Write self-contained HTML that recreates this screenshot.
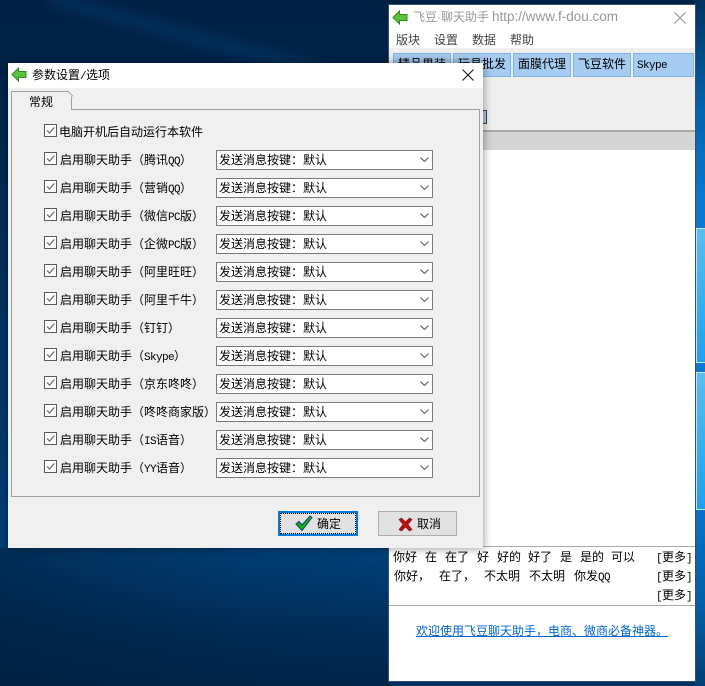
<!DOCTYPE html>
<html lang="zh-CN">
<head>
<meta charset="utf-8">
<title>参数设置/选项</title>
<style>
html,body{margin:0;padding:0;width:705px;height:686px;overflow:hidden;}
body{position:relative;font-family:"WenQuanYi Zen Hei","Liberation Sans","Noto Sans CJK SC",sans-serif;font-size:12px;color:#000;background:#012a55;}
.abs,.abs *{box-sizing:border-box;}
.abs{position:absolute;}
.t{position:absolute;white-space:pre;line-height:14px;height:14px;}
i{font-style:normal;font-family:"Liberation Mono",monospace;font-size:11px;letter-spacing:-.6px;}
#bg{left:0;top:0;width:705px;height:686px;background:linear-gradient(180deg,#011f42 0%,#01254c 12%,#013567 50%,#01407a 78%,#012f5e 100%);}
#bg2{left:0;top:548px;width:389px;height:138px;background:linear-gradient(90deg,rgba(1,28,56,.5) 0%,rgba(1,28,56,.12) 60%,rgba(1,28,56,0) 100%),linear-gradient(180deg,#00417a 0%,#00396e 25%,#012d58 60%,#01244a 100%);}
#streak{left:50px;top:-8px;width:340px;height:12px;background:#02325f;transform:rotate(15deg);transform-origin:0 0;filter:blur(6px);}
#win{left:389px;top:5px;width:306px;height:676px;background:#fff;box-shadow:0 0 0 1px #33506f;}
#strip{left:695px;top:0;width:10px;height:686px;background:linear-gradient(180deg,#01335f 0%,#0463ad 16%,#0a78d0 30%,#0a78d0 70%,#045fa8 88%,#023e76 100%);}
.pane{position:absolute;left:696px;width:9px;background:linear-gradient(180deg,#5dbcf0,#1fa0ea);border:1px solid #c3e4f3;border-right:0;}
.tb{position:absolute;top:53px;width:56px;height:22px;background:#a6ccf2;border:1px solid #7fb3ee;line-height:21px;text-align:center;}
#dlg{left:8px;top:63px;width:475px;height:485px;background:#f0f0f0;box-shadow:0 0 8px 1px rgba(0,0,0,.38);}
#dt{left:0;top:0;width:475px;height:25px;background:#fff;}
#panel{left:3px;top:46px;width:469px;height:388px;border:1px solid #a0a0a0;background:#f0f0f0;}
#tab{left:3px;top:28px;width:61px;height:19px;background:#f0f0f0;border:1px solid #a0a0a0;border-bottom:0;clip-path:polygon(0 0,56px 0,100% 6px,100% 100%,0 100%);}
#tabd{left:59px;top:28px;width:1px;height:8px;background:#a0a0a0;transform:rotate(-45deg);transform-origin:0 0;}
.cb{position:absolute;left:36px;width:13px;height:13px;border:1px solid #5a5a5a;background:#fff;}
.sel{position:absolute;left:208px;width:217px;height:20px;border:1px solid #7a7a7a;background:#fff;line-height:18px;padding-left:2px;}
.btn{position:absolute;top:448px;height:25px;}
</style>
</head>
<body>
<div class="abs" id="bg"></div>
<div class="abs" id="bg2"></div>
<div class="abs" id="streak"></div>
<div class="abs" id="strip"></div>
<div class="pane" style="top:228px;height:133px;"></div>
<div class="pane" style="top:372px;height:136px;"></div>

<div class="abs" id="win">
  <svg style="position:absolute;left:3px;top:5px" width="16" height="15" viewBox="0 0 16 15"><path d="M1 7.500 7.500 1v3.500H15v6H7.500V14z" fill="#5cc13c" stroke="#2f8a1e"/></svg>
  <div class="t" style="left:24px;top:5px;color:#989898;">飞豆·聊天助手</div>
  <div class="t" style="left:103px;top:5px;color:#989898;font-size:13.5px;font-family:'Liberation Sans',sans-serif;">http://www.f-dou.com</div>
  <svg style="position:absolute;left:285px;top:7px" width="12" height="12" viewBox="0 0 12 12"><path d="M.5.5l11 11M11.5.5l-11 11" stroke="#8f8f8f" fill="none"/></svg>
  <div class="t" style="left:7px;top:28px;color:#444;">版块</div>
  <div class="t" style="left:45px;top:28px;color:#444;">设置</div>
  <div class="t" style="left:83px;top:28px;color:#444;">数据</div>
  <div class="t" style="left:121px;top:28px;color:#444;">帮助</div>
  <div class="abs" style="left:0;top:43px;width:306px;height:82px;background:#efefef;"></div>
  <div class="abs" style="left:0;top:125px;width:306px;height:2px;background:#a9a9a9;"></div>
  <div class="abs" style="left:0;top:127px;width:306px;height:18px;background:#d4d4d4;"></div>
  <div class="abs" style="left:93px;top:105px;width:5px;height:14px;border:1px solid #2c4a77;background:#b8c8dc;"></div>
  <div class="abs" style="left:0;top:541px;width:306px;height:1px;background:#a9a9a9;"></div>
  <div class="abs" style="left:0;top:600px;width:306px;height:1px;background:#a9a9a9;"></div>
  <div class="t" style="left:4px;top:545px;">你好</div>
  <div class="t" style="left:36px;top:545px;">在</div>
  <div class="t" style="left:56px;top:545px;">在了</div>
  <div class="t" style="left:88px;top:545px;">好</div>
  <div class="t" style="left:108px;top:545px;">好的</div>
  <div class="t" style="left:139px;top:545px;">好了</div>
  <div class="t" style="left:171px;top:545px;">是</div>
  <div class="t" style="left:191px;top:545px;">是的</div>
  <div class="t" style="left:222px;top:545px;">可以</div>
  <div class="t" style="left:5px;top:564px;">你好，</div>
  <div class="t" style="left:50px;top:564px;">在了，</div>
  <div class="t" style="left:95px;top:564px;">不太明</div>
  <div class="t" style="left:140px;top:564px;">不太明</div>
  <div class="t" style="left:185px;top:564px;">你发<i>QQ</i></div>
  <div class="t" style="left:267px;top:545px;"><i>[</i>更多<i>]</i></div>
  <div class="t" style="left:267px;top:564px;"><i>[</i>更多<i>]</i></div>
  <div class="t" style="left:267px;top:583px;"><i>[</i>更多<i>]</i></div>
  <div class="t" style="left:27px;top:619px;color:#0066cc;text-decoration:underline;">欢迎使用飞豆聊天助手，电商、微商必备神器。</div>
</div>

<div class="tb" style="left:393px;">精品男装</div>
<div class="tb" style="left:453px;">玩具批发</div>
<div class="tb" style="left:513px;">面膜代理</div>
<div class="tb" style="left:573px;">飞豆软件</div>
<div class="tb" style="left:633px;text-align:left;padding-left:3px;"><i>Skype</i></div>

<div class="abs" id="dlg">
  <div class="abs" id="dt"></div>
  <svg style="position:absolute;left:3px;top:4px" width="16" height="15" viewBox="0 0 16 15"><path d="M1 7.500 7.500 1v3.500H15v6H7.500V14z" fill="#5cc13c" stroke="#2f8a1e"/></svg>
  <div class="t" style="left:24px;top:5px;">参数设置<i>/</i>选项</div>
  <svg style="position:absolute;left:454px;top:6px" width="12" height="12" viewBox="0 0 12 12"><path d="M.5.5l11 11M11.5.5l-11 11" stroke="#111" fill="none"/></svg>
  <div class="abs" id="panel"></div>
  <div class="abs" id="tab"></div>
  <div class="abs" id="tabd"></div>
  <div class="t" style="left:21px;top:32px;">常规</div>

  <div class="cb" style="top:61px"><svg width="11" height="11" style="display:block"><path d="M2 5.500 4.500 8 9.500 2.500" stroke="#666" stroke-width="1.2" fill="none"/></svg></div>
  <div class="t" style="left:51px;top:62px;">电脑开机后自动运行本软件</div>

  <div class="cb" style="top:89px"><svg width="11" height="11" style="display:block"><path d="M2 5.500 4.500 8 9.500 2.500" stroke="#666" stroke-width="1.2" fill="none"/></svg></div>
  <div class="t" style="left:52px;top:90px;">启用聊天助手（腾讯<i>QQ</i>）</div>
  <div class="sel" style="top:87px">发送消息按键：默认<svg style="position:absolute;right:3px;top:6px" width="9" height="6"><path d="M.5.5 4.500 4.500 8.500.5" stroke="#555" fill="none"/></svg></div>

  <div class="cb" style="top:117px"><svg width="11" height="11" style="display:block"><path d="M2 5.500 4.500 8 9.500 2.500" stroke="#666" stroke-width="1.2" fill="none"/></svg></div>
  <div class="t" style="left:52px;top:118px;">启用聊天助手（营销<i>QQ</i>）</div>
  <div class="sel" style="top:115px">发送消息按键：默认<svg style="position:absolute;right:3px;top:6px" width="9" height="6"><path d="M.5.5 4.500 4.500 8.500.5" stroke="#555" fill="none"/></svg></div>

  <div class="cb" style="top:145px"><svg width="11" height="11" style="display:block"><path d="M2 5.500 4.500 8 9.500 2.500" stroke="#666" stroke-width="1.2" fill="none"/></svg></div>
  <div class="t" style="left:52px;top:146px;">启用聊天助手（微信<i>PC</i>版）</div>
  <div class="sel" style="top:143px">发送消息按键：默认<svg style="position:absolute;right:3px;top:6px" width="9" height="6"><path d="M.5.5 4.500 4.500 8.500.5" stroke="#555" fill="none"/></svg></div>

  <div class="cb" style="top:173px"><svg width="11" height="11" style="display:block"><path d="M2 5.500 4.500 8 9.500 2.500" stroke="#666" stroke-width="1.2" fill="none"/></svg></div>
  <div class="t" style="left:52px;top:174px;">启用聊天助手（企微<i>PC</i>版）</div>
  <div class="sel" style="top:171px">发送消息按键：默认<svg style="position:absolute;right:3px;top:6px" width="9" height="6"><path d="M.5.5 4.500 4.500 8.500.5" stroke="#555" fill="none"/></svg></div>

  <div class="cb" style="top:201px"><svg width="11" height="11" style="display:block"><path d="M2 5.500 4.500 8 9.500 2.500" stroke="#666" stroke-width="1.2" fill="none"/></svg></div>
  <div class="t" style="left:52px;top:202px;">启用聊天助手（阿里旺旺）</div>
  <div class="sel" style="top:199px">发送消息按键：默认<svg style="position:absolute;right:3px;top:6px" width="9" height="6"><path d="M.5.5 4.500 4.500 8.500.5" stroke="#555" fill="none"/></svg></div>

  <div class="cb" style="top:229px"><svg width="11" height="11" style="display:block"><path d="M2 5.500 4.500 8 9.500 2.500" stroke="#666" stroke-width="1.2" fill="none"/></svg></div>
  <div class="t" style="left:52px;top:230px;">启用聊天助手（阿里千牛）</div>
  <div class="sel" style="top:227px">发送消息按键：默认<svg style="position:absolute;right:3px;top:6px" width="9" height="6"><path d="M.5.5 4.500 4.500 8.500.5" stroke="#555" fill="none"/></svg></div>

  <div class="cb" style="top:257px"><svg width="11" height="11" style="display:block"><path d="M2 5.500 4.500 8 9.500 2.500" stroke="#666" stroke-width="1.2" fill="none"/></svg></div>
  <div class="t" style="left:52px;top:258px;">启用聊天助手（钉钉）</div>
  <div class="sel" style="top:255px">发送消息按键：默认<svg style="position:absolute;right:3px;top:6px" width="9" height="6"><path d="M.5.5 4.500 4.500 8.500.5" stroke="#555" fill="none"/></svg></div>

  <div class="cb" style="top:285px"><svg width="11" height="11" style="display:block"><path d="M2 5.500 4.500 8 9.500 2.500" stroke="#666" stroke-width="1.2" fill="none"/></svg></div>
  <div class="t" style="left:52px;top:286px;">启用聊天助手（<i>Skype</i>）</div>
  <div class="sel" style="top:283px">发送消息按键：默认<svg style="position:absolute;right:3px;top:6px" width="9" height="6"><path d="M.5.5 4.500 4.500 8.500.5" stroke="#555" fill="none"/></svg></div>

  <div class="cb" style="top:313px"><svg width="11" height="11" style="display:block"><path d="M2 5.500 4.500 8 9.500 2.500" stroke="#666" stroke-width="1.2" fill="none"/></svg></div>
  <div class="t" style="left:52px;top:314px;">启用聊天助手（京东咚咚）</div>
  <div class="sel" style="top:311px">发送消息按键：默认<svg style="position:absolute;right:3px;top:6px" width="9" height="6"><path d="M.5.5 4.500 4.500 8.500.5" stroke="#555" fill="none"/></svg></div>

  <div class="cb" style="top:341px"><svg width="11" height="11" style="display:block"><path d="M2 5.500 4.500 8 9.500 2.500" stroke="#666" stroke-width="1.2" fill="none"/></svg></div>
  <div class="t" style="left:52px;top:342px;">启用聊天助手（咚咚商家版）</div>
  <div class="sel" style="top:339px">发送消息按键：默认<svg style="position:absolute;right:3px;top:6px" width="9" height="6"><path d="M.5.5 4.500 4.500 8.500.5" stroke="#555" fill="none"/></svg></div>

  <div class="cb" style="top:369px"><svg width="11" height="11" style="display:block"><path d="M2 5.500 4.500 8 9.500 2.500" stroke="#666" stroke-width="1.2" fill="none"/></svg></div>
  <div class="t" style="left:52px;top:370px;">启用聊天助手（<i>IS</i>语音）</div>
  <div class="sel" style="top:367px">发送消息按键：默认<svg style="position:absolute;right:3px;top:6px" width="9" height="6"><path d="M.5.5 4.500 4.500 8.500.5" stroke="#555" fill="none"/></svg></div>

  <div class="cb" style="top:397px"><svg width="11" height="11" style="display:block"><path d="M2 5.500 4.500 8 9.500 2.500" stroke="#666" stroke-width="1.2" fill="none"/></svg></div>
  <div class="t" style="left:52px;top:398px;">启用聊天助手（<i>YY</i>语音）</div>
  <div class="sel" style="top:395px">发送消息按键：默认<svg style="position:absolute;right:3px;top:6px" width="9" height="6"><path d="M.5.5 4.500 4.500 8.500.5" stroke="#555" fill="none"/></svg></div>

  <div class="btn" style="left:270px;width:80px;background:#e1e1e1;border:2px solid #0078d7;">
    <div class="abs" style="left:0;top:0;width:76px;height:21px;border:1px dotted #000;"></div>
    <svg style="position:absolute;left:15px;top:2px" width="18" height="17" viewBox="0 0 18 17"><path d="M1 9 4 6.500 7 10 15 1 17 2.500 7 15.500z" fill="#12b512" stroke="#0b3c7a" stroke-width="1"/></svg>
    <div class="t" style="left:37px;top:4px;">确定</div>
  </div>
  <div class="btn" style="left:370px;width:79px;background:#e1e1e1;border:1px solid #adadad;">
    <svg style="position:absolute;left:19px;top:5px" width="15" height="15" viewBox="0 0 15 15"><path d="M1 2.500 3.500 1 7.500 5 11.500 1 14 2.500 10 7.500 14 12.500 11.500 14 7.500 10 3.500 14 1 12.500 5 7.500z" fill="#b80f0f" stroke="#7c1111" stroke-width=".6"/></svg>
    <div class="t" style="left:38px;top:5px;">取消</div>
  </div>
</div>
</body>
</html>
